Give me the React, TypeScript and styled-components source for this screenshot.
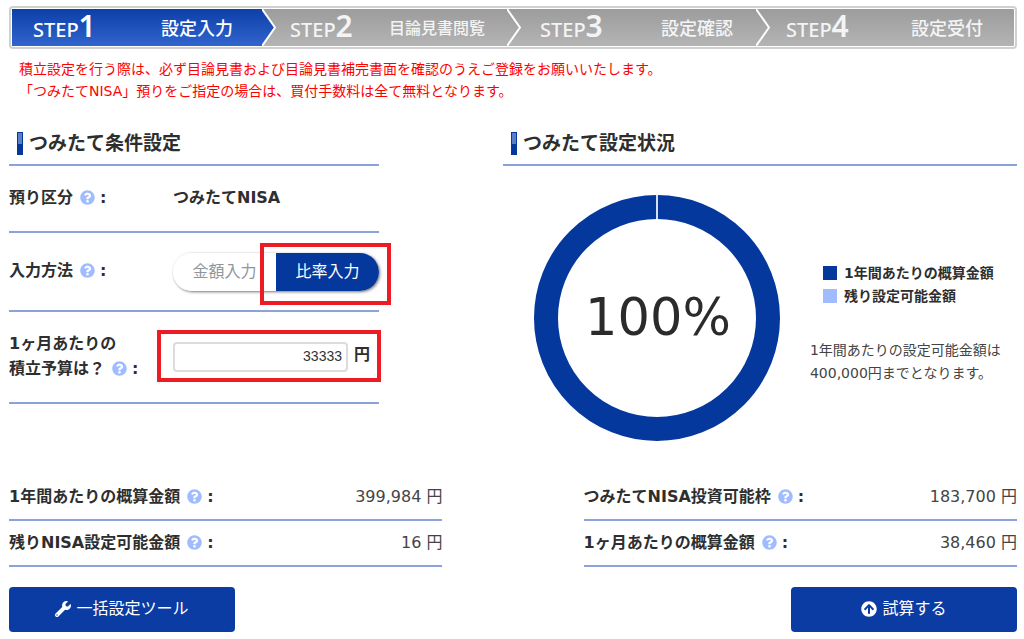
import React from 'react';
import styled, { createGlobalStyle, css } from 'styled-components';
import { FaQuestionCircle, FaWrench, FaArrowCircleUp } from 'react-icons/fa';

const navy = '#04389d';
const rule = '#8aa3da';

const GlobalStyle = createGlobalStyle`
  *, *::before, *::after { box-sizing: border-box; }
  body {
    margin: 0;
    background: #fff;
    color: #2e2e2e;
    font: 16px/24px "DejaVu Sans", "Noto Sans CJK JP", sans-serif;
  }
  h2, p, ol, ul, dl, dd { margin: 0; padding: 0; }
  ol, ul { list-style: none; }
  button, input { font-family: inherit; }
`;

const Page = styled.main`
  padding: 6px 7px 6px 9px;
`;

const Steps = styled.ol`
  display: grid;
  grid-template-columns: 264fr 245fr 249fr 244fr;
  grid-template-rows: 37px;
  border: 2px solid #d0d0d0;
  border-radius: 4px;
  padding: 1px;
  background: linear-gradient(#9c9c9c, #b4b4b4) content-box, #fff;
`;

const Step = styled.li`
  display: flex;
  min-width: 0;
`;

const StepBody = styled.div<{ $active: boolean; $start: number; $end: number }>`
  flex: 1;
  display: flex;
  align-items: center;
  justify-content: space-between;
  padding: 0 ${p => p.$end}px 0 ${p => p.$start}px;
  color: ${p => (p.$active ? '#fff' : '#f4f4f4')};
  background: ${p => (p.$active ? 'linear-gradient(#0c3fa8, #3164cc)' : 'none')};
  white-space: nowrap;
`;

const StepName = styled.span`
  padding-top: 3px;
  font: 500 20px/34px "Noto Sans", sans-serif;
`;

const StepNumber = styled.span`
  font-size: 30px;
  font-weight: 600;
  line-height: 30px;
`;

const StepTitle = styled.span<{ $long: boolean }>`
  padding-bottom: 2px;
  font: 500 18px/28px "Noto Sans CJK JP", sans-serif;
  font-size: ${p => (p.$long ? 16 : 18)}px;
`;

const ChevronSvg = styled.svg`
  display: block;
  flex: none;
`;

function Chevron({ active }: { active?: boolean }) {
  return (
    <ChevronSvg width="14" height="37" viewBox="0 0 14 37" aria-hidden="true">
      {active && (
        <>
          <defs>
            <linearGradient id="activeStep" x1="0" y1="0" x2="0" y2="1">
              <stop offset="0" stopColor="#0c3fa8" />
              <stop offset="1" stopColor="#3164cc" />
            </linearGradient>
          </defs>
          <path d="M0 0 L13 18.5 L0 37Z" fill="url(#activeStep)" />
        </>
      )}
      <path d="M0 0 L13 18.5 L0 37" fill="none" stroke="#fff" strokeWidth="2" />
    </ChevronSvg>
  );
}

const Notice = styled.p`
  padding: 9px 10px 0;
  color: #f00;
  font-size: 14px;
  line-height: 22px;
`;

const Columns = styled.div<{ $split: string }>`
  display: grid;
  grid-template-columns: ${p => p.$split};
  justify-content: space-between;
`;

const Panels = styled(Columns)`
  padding-top: 20px;
`;

const SummaryArea = styled(Columns)`
  padding-top: 34px;
`;

const Heading = styled.h2`
  display: flex;
  align-items: center;
  gap: 6px;
  height: 44px;
  padding: 0 8px;
  border-bottom: 2px solid ${rule};
  font-size: 19px;
  line-height: 28px;

  &::before {
    content: "";
    width: 6px;
    height: 23px;
    border: 1px solid ${navy};
    background: linear-gradient(#5a7fc9 50%, ${navy} 50%);
  }
`;

const Field = styled.div<{ $height: number }>`
  display: grid;
  grid-template-columns: 164px 1fr;
  align-items: center;
  height: ${p => p.$height}px;
  border-bottom: 2px solid ${rule};
  font-weight: bold;
`;

const FieldText = styled.div`
  padding-bottom: 2px;
  line-height: 25px;
`;

const HelpButton = styled.button`
  display: inline-flex;
  margin: 0 5px 0 7px;
  padding: 0;
  border: 0;
  background: none;
  color: #a0bcff;
  font-size: 15px;
  vertical-align: -2px;
`;

function Help({ topic }: { topic: string }) {
  return (
    <>
      <HelpButton type="button" aria-label={topic}>
        <FaQuestionCircle />
      </HelpButton>
      :
    </>
  );
}

const Toggle = styled.div`
  display: flex;
  width: 206px;
  height: 38px;
  border-radius: 19px;
  box-shadow: 1px 1px 3px rgba(0, 0, 0, 0.55);
`;

const ToggleButton = styled.button<{ $on?: boolean }>`
  flex: 1;
  padding: 0 0 4px;
  border: 0;
  border-radius: ${p => (p.$on ? '0 19px 19px 0' : '19px 0 0 19px')};
  background: ${p => (p.$on ? navy : '#fff')};
  color: ${p => (p.$on ? '#fff' : '#8f979c')};
  font-size: 16px;
`;

const marker = css`
  content: "";
  position: absolute;
  border: 4px solid #ed1c24;
  pointer-events: none;
`;

const MarkedToggle = styled.div`
  position: relative;
  justify-self: start;
  &::after {
    ${marker}
    inset: -10px -12px -14px 87px;
  }
`;

const BudgetEntry = styled.div`
  position: relative;
  display: flex;
  align-items: center;
  gap: 6px;
  &::after {
    ${marker}
    inset: -12px -2px -10px -16px;
  }
`;

const AmountInput = styled.input`
  width: 175px;
  height: 30px;
  padding: 0 4px 2px;
  border: 2px solid #dcdcdc;
  border-radius: 4px;
  color: #333;
  font: 14px "Liberation Sans", sans-serif;
  text-align: right;
`;

const Unit = styled.span`
  padding-bottom: 4px;
`;

const Chart = styled.div`
  display: flex;
  align-items: center;
  padding: 29px 0 0 31px;
`;

const ChartNotes = styled.div`
  padding: 10px 0 0 30px;
  font-size: 14px;
  line-height: 23px;
`;

const Legend = styled.ul`
  padding: 0 0 31px 13px;
  font-weight: bold;
`;

const LegendItem = styled.li<{ $color: string }>`
  display: flex;
  align-items: center;
  gap: 7px;
  &::before {
    content: "";
    width: 14px;
    height: 14px;
    background: ${p => p.$color};
  }
`;

const Limit = styled.p`
  color: #444;
`;

const SummaryRow = styled.div`
  display: flex;
  justify-content: space-between;
  align-items: center;
  height: 46px;
  padding-bottom: 1px;
  border-bottom: 2px solid ${rule};
`;

const SummaryLabel = styled.dt`
  font-weight: bold;
`;

const SummaryValue = styled.dd`
  color: #444;
`;

const Actions = styled.div`
  display: flex;
  justify-content: space-between;
  padding-top: 20px;
`;

const ActionButton = styled.button`
  display: flex;
  align-items: center;
  justify-content: center;
  gap: 5px;
  width: 226px;
  height: 45px;
  padding: 0 0 2px;
  border: 0;
  border-radius: 4px;
  background: #0a3ca4;
  color: #fff;
  font-size: 16px;
  line-height: 22px;
`;

const steps = [
  { title: '設定入力', start: 21, end: 29 },
  { title: '目論見書閲覧', start: 14, end: 22 },
  { title: '設定確認', start: 19, end: 23 },
  { title: '設定受付', start: 16, end: 31 },
];

const totals = [
  [
    ['1年間あたりの概算金額', '399,984 円'],
    ['残りNISA設定可能金額', '16 円'],
  ],
  [
    ['つみたてNISA投資可能枠', '183,700 円'],
    ['1ヶ月あたりの概算金額', '38,460 円'],
  ],
];

export default function App() {
  return (
    <Page lang="ja">
      <GlobalStyle />
      <Steps>
        {steps.map(({ title, start, end }, i) => (
          <Step key={title} aria-current={i === 0 ? 'step' : undefined}>
            <StepBody $active={i === 0} $start={start} $end={end}>
              <StepName>
                STEP<StepNumber>{i + 1}</StepNumber>
              </StepName>
              <StepTitle $long={title.length > 4}>{title}</StepTitle>
            </StepBody>
            {i < steps.length - 1 && <Chevron active={i === 0} />}
          </Step>
        ))}
      </Steps>
      <Notice>
        積立設定を行う際は、必ず目論見書および目論見書補完書面を確認のうえご登録をお願いいたします。
        <br />
        「つみたてNISA」預りをご指定の場合は、買付手数料は全て無料となります。
      </Notice>

      <Panels $split="370px 51%">
        <section>
          <Heading>つみたて条件設定</Heading>
          <Field $height={67}>
            <FieldText>
              預り区分
              <Help topic="預り区分" />
            </FieldText>
            <FieldText>つみたてNISA</FieldText>
          </Field>
          <Field $height={79}>
            <FieldText>
              入力方法
              <Help topic="入力方法" />
            </FieldText>
            <MarkedToggle>
              <Toggle>
                <ToggleButton type="button">金額入力</ToggleButton>
                <ToggleButton type="button" $on aria-pressed="true">
                  比率入力
                </ToggleButton>
              </Toggle>
            </MarkedToggle>
          </Field>
          <Field $height={92}>
            <FieldText>
              <label htmlFor="budget">
                1ヶ月あたりの
                <br />
                積立予算は？
              </label>
              <Help topic="積立予算" />
            </FieldText>
            <BudgetEntry>
              <AmountInput id="budget" defaultValue="33333" inputMode="numeric" />
              <Unit>円</Unit>
            </BudgetEntry>
          </Field>
        </section>

        <section>
          <Heading>つみたて設定状況</Heading>
          <Chart>
            <svg width="246" height="246" viewBox="0 0 246 246" role="img" aria-label="100%">
              <circle cx="123" cy="123" r="111" fill="none" stroke={navy} strokeWidth="24" />
              <path d="M123 0V24" stroke="#d5def2" strokeWidth="2" />
              <text
                x="124"
                y="140"
                textAnchor="middle"
                fontFamily="DejaVu Sans, sans-serif"
                fontSize="51"
                fill="#2b2b2b"
              >
                100%
              </text>
            </svg>
            <ChartNotes>
              <Legend>
                <LegendItem $color={navy}>1年間あたりの概算金額</LegendItem>
                <LegendItem $color="#a0bcff">残り設定可能金額</LegendItem>
              </Legend>
              <Limit>
                1年間あたりの設定可能金額は
                <br />
                400,000円までとなります。
              </Limit>
            </ChartNotes>
          </Chart>
        </section>
      </Panels>

      <SummaryArea $split="43% 43%">
        {totals.map((rows, i) => (
          <dl key={i}>
            {rows.map(([label, value]) => (
              <SummaryRow key={label}>
                <SummaryLabel>
                  {label}
                  <Help topic={label} />
                </SummaryLabel>
                <SummaryValue>{value}</SummaryValue>
              </SummaryRow>
            ))}
          </dl>
        ))}
      </SummaryArea>

      <Actions>
        <ActionButton type="button">
          <FaWrench />
          一括設定ツール
        </ActionButton>
        <ActionButton type="button">
          <FaArrowCircleUp />
          試算する
        </ActionButton>
      </Actions>
    </Page>
  );
}
